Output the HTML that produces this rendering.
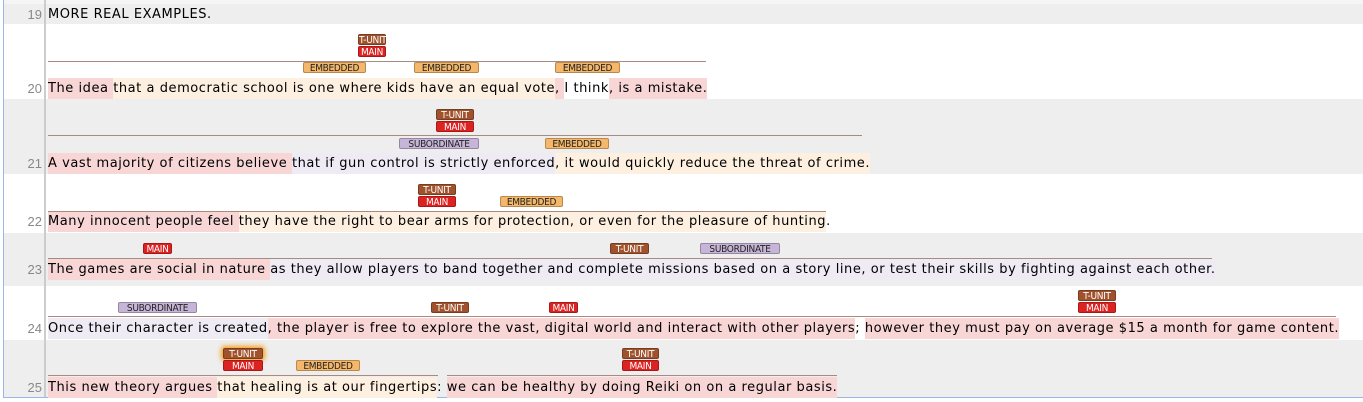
<!DOCTYPE html>
<html><head><meta charset="utf-8"><style>
body{margin:0;width:1363px;height:402px;overflow:hidden;background:#fff;font-family:"Liberation Sans",Arial,sans-serif;position:relative}
.row{position:absolute;left:4px;width:1359px}
.g{background:#eeeeee}
.num{position:absolute;left:4px;width:38px;text-align:right;font-size:13px;color:#888}
.txt{position:absolute;left:48px;font-family:"DejaVu Sans",sans-serif;font-size:13px;letter-spacing:0.55px;white-space:nowrap;color:#000}
.txt span{padding:3px 0 3px}
.p{background:#f8d6d6}.c{background:#fdf0e0}.l{background:#eeebf5}.w{background:#fff}
.lb{position:absolute;height:11px;font-family:"DejaVu Sans Condensed","Liberation Sans Narrow",sans-serif;font-size:10px;line-height:11px;text-align:center;border-radius:2px;box-sizing:border-box;border:1px solid rgba(0,0,0,.25);white-space:nowrap;overflow:visible;letter-spacing:-0.3px}
.t{background:#a0522d;color:#fff}.m{background:#dd2222;color:#fff}.e{background:#f5b769;color:#222}.s{background:#c7b5d8;color:#222}
.ln{position:absolute;height:1px;background:#a88a80}
</style></head><body>
<div style="position:absolute;left:4px;top:0;width:1359px;height:4px;background:#f5f5f5"></div>
<div class="row g" style="top:4px;height:20px"></div>
<div class="row" style="top:24px;height:75px"></div>
<div class="row g" style="top:99px;height:75px"></div>
<div class="row" style="top:174px;height:59px"></div>
<div class="row g" style="top:233px;height:53px"></div>
<div class="row" style="top:286px;height:54px"></div>
<div class="row g" style="top:340px;height:57px"></div>
<div style="position:absolute;left:3px;top:0;width:1px;height:398px;background:#9db5e8"></div>
<div style="position:absolute;left:3px;top:397px;width:1360px;height:1px;background:#9db5e8"></div>
<div style="position:absolute;left:44px;top:0;width:2px;height:397px;background:#ccc"></div>

<div class="num" style="top:7px">19</div><div class="txt" style="top:7px">MORE REAL EXAMPLES.</div>

<div class="num" style="top:81px">20</div>
<div class="txt" style="top:81px"><span class="p">The idea </span><span class="c">that a democratic school is one where kids have an equal vote</span><span class="p">, </span><span class="w">I think</span><span class="p">, is a mistake.</span></div>
<div class="lb t" style="left:358px;top:34px;width:28px">T-UNIT</div><div class="lb m" style="left:358px;top:46px;width:28px">MAIN</div>
<div class="ln" style="left:48px;top:61px;width:658px"></div>
<div class="lb e" style="left:303px;top:62px;width:63px">EMBEDDED</div><div class="lb e" style="left:414px;top:62px;width:65px">EMBEDDED</div><div class="lb e" style="left:555px;top:62px;width:65px">EMBEDDED</div>

<div class="num" style="top:156px">21</div>
<div class="txt" style="top:156px"><span class="p">A vast majority of citizens believe </span><span class="l">that if gun control is strictly enforced</span><span class="c">, it would quickly reduce the threat of crime.</span></div>
<div class="lb t" style="left:436px;top:109px;width:38px">T-UNIT</div><div class="lb m" style="left:436px;top:121px;width:38px">MAIN</div>
<div class="ln" style="left:48px;top:135px;width:814px"></div>
<div class="lb s" style="left:399px;top:138px;width:80px">SUBORDINATE</div><div class="lb e" style="left:545px;top:138px;width:64px">EMBEDDED</div>

<div class="num" style="top:214px">22</div>
<div class="txt" style="top:214px"><span class="p">Many innocent people feel </span><span class="c">they have the right to bear arms for protection, or even for the pleasure of hunting</span>.</div>
<div class="lb t" style="left:418px;top:184px;width:38px">T-UNIT</div><div class="lb m" style="left:418px;top:196px;width:38px">MAIN</div>
<div class="lb e" style="left:500px;top:196px;width:63px">EMBEDDED</div>
<div class="ln" style="left:48px;top:211px;width:778px"></div>

<div class="num" style="top:262px">23</div>
<div class="txt" style="top:262px"><span class="p">The games are social in nature </span><span class="l">as they allow players to band together and complete missions based on a story line, or test their skills by fighting against each other.</span></div>
<div class="lb m" style="left:143px;top:243px;width:29px">MAIN</div><div class="lb t" style="left:610px;top:243px;width:39px">T-UNIT</div><div class="lb s" style="left:700px;top:243px;width:80px">SUBORDINATE</div>
<div class="ln" style="left:48px;top:258px;width:1164px"></div>

<div class="num" style="top:321px">24</div>
<div class="txt" style="top:321px"><span class="l">Once their character is created</span><span class="p">, the player is free to explore the vast, digital world and interact with other players</span>; <span class="p">however they must pay on average $15 a month for game content.</span></div>
<div class="lb s" style="left:118px;top:302px;width:79px">SUBORDINATE</div><div class="lb t" style="left:431px;top:302px;width:38px">T-UNIT</div><div class="lb m" style="left:549px;top:302px;width:29px">MAIN</div>
<div class="lb t" style="left:1078px;top:290px;width:38px">T-UNIT</div><div class="lb m" style="left:1078px;top:302px;width:38px">MAIN</div>
<div class="ln" style="left:48px;top:316px;width:1288px"></div>

<div class="num" style="top:380px">25</div>
<div class="txt" style="top:380px"><span class="p">This new theory argues </span><span class="c">that healing is at our fingertips</span>: <span class="p">we can be healthy by doing Reiki on on a regular basis.</span></div>
<div class="lb t" style="left:223px;top:348px;width:40px;box-shadow:0 0 5px 2px #f5a020">T-UNIT</div><div class="lb m" style="left:223px;top:360px;width:40px">MAIN</div>
<div class="lb e" style="left:296px;top:360px;width:64px">EMBEDDED</div>
<div class="lb t" style="left:622px;top:348px;width:37px">T-UNIT</div><div class="lb m" style="left:622px;top:360px;width:37px">MAIN</div>
<div class="ln" style="left:48px;top:375px;width:390px"></div><div class="ln" style="left:447px;top:375px;width:390px"></div>
</body></html>
